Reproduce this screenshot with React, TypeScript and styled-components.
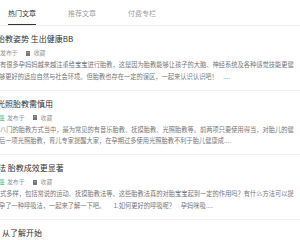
import React, { FC } from 'react'
import styled, { createGlobalStyle } from 'styled-components'

const GlobalStyle = createGlobalStyle`
  html, body {
    margin: 0;
    padding: 0;
    background: #ffffff;
    overflow: hidden;
  }
  body {
    font-family: 'Noto Sans CJK SC', 'Noto Sans', sans-serif;
    color: #333333;
  }
`

const Page = styled.div`
  width: 300px;
  height: 240px;
  overflow: hidden;
  background: #ffffff;
`

const TabBar = styled.div`
  display: flex;
  gap: 32px;
  height: 25px;
  padding-left: 8px;
  border-bottom: 1px solid #eeeeee;
  box-sizing: content-box;
`

const Tab = styled.div<{ $active?: boolean }>`
  position: relative;
  display: flex;
  align-items: center;
  height: 25px;
  font-size: 7px;
  line-height: 10px;
  color: ${({ $active }) => ($active ? '#333333' : '#a0a0a0')};
  white-space: nowrap;
  &::after {
    content: '';
    position: absolute;
    left: 0;
    right: 0;
    bottom: 0;
    height: 1.5px;
    background: ${({ $active }) => ($active ? '#333333' : 'transparent')};
  }
`

const List = styled.div`
  display: flex;
  flex-direction: column;
`

const Item = styled.div`
  padding: 7px 0 7.6px;
  border-bottom: 1px solid #f0f0f0;
  overflow: hidden;
`

const Title = styled.div<{ $shift: number }>`
  margin-left: ${({ $shift }) => $shift}px;
  font-size: 8px;
  line-height: 11px;
  color: #333333;
  white-space: pre;
`

const Meta = styled.div`
  display: flex;
  align-items: center;
  margin-top: 5px;
  height: 8px;
  font-size: 5.9px;
  line-height: 8px;
  color: #999999;
  white-space: nowrap;
`

const Tag = styled.span<{ $shift: number }>`
  margin-left: ${({ $shift }) => $shift}px;
  margin-right: 2px;
  color: #3cb371;
`

const Published = styled.span<{ $shift: number }>`
  margin-left: ${({ $shift }) => $shift}px;
  margin-right: 8px;
`

const Collect = styled.span`
  display: flex;
  align-items: center;
  gap: 4px;
`

const Body = styled.div`
  margin-top: 2px;
  font-size: 6.25px;
  line-height: 11.5px;
  color: #777777;
`

const Line = styled.div<{ $shift: number }>`
  margin-left: ${({ $shift }) => $shift}px;
  white-space: pre;
`

const BookIcon: FC = () => (
  <svg width='4' height='5' viewBox='0 0 4 5'>
    <rect x='0' y='0' width='4' height='4' fill='#777777' />
    <path d='M0 4 L2 3.2 L4 4 L4 5 L0 5 Z' fill='#777777' />
    <rect x='0.8' y='1.2' width='2.4' height='0.5' fill='#cccccc' />
  </svg>
)

type Article = {
  title: string
  titleShift: number
  tag?: string
  metaShift: number
  lines: [string, number][]
}

const articles: Article[] = [
  {
    title: '胎教姿势 生出健康BB',
    titleShift: -3,
    metaShift: 0,
    lines: [
      ['有很多孕妈妈越来越注重给宝宝进行胎教，这是因为胎教能够让孩子的大脑、神经系统及各种感觉技能更健', 0],
      ['够更好的适应自然与社会环境。但胎教也存在一定的误区，一起来认识认识吧！    ....', -1],
    ],
  },
  {
    title: '光照胎教需慎用',
    titleShift: -3,
    tag: '签',
    metaShift: -1,
    lines: [
      ['八门的胎教方式当中，最为常见的有音乐胎教、抚摸胎教、光照胎教等。前两项只要使用得当，对胎儿的健', 0],
      ['后一项光照胎教，育儿专家提醒大家，在孕期过多使用光照胎教不利于胎儿健康成....', -1],
    ],
  },
  {
    title: '法 胎教成效更显著',
    titleShift: -2,
    tag: '签',
    metaShift: -1,
    lines: [
      ['式多样，包括常说的运动、抚摸胎教法等。这些胎教法真的对胎宝宝起到一定的作用吗？有什么方法可以提', 0],
      ['孕了一种呼吸法，一起来了解一下吧。      1.如何更好的呼吸呢？    孕妈咪吸....', -1],
    ],
  },
]

const App: FC = () => (
  <Page>
    <GlobalStyle />
    <TabBar>
      <Tab $active>热门文章</Tab>
      <Tab>推荐文章</Tab>
      <Tab>付费专栏</Tab>
    </TabBar>
    <List>
      {articles.map((a) => (
        <Item key={a.title}>
          <Title $shift={a.titleShift}>{a.title}</Title>
          <Meta>
            {a.tag && <Tag $shift={a.metaShift}>{a.tag}</Tag>}
            <Published $shift={a.tag ? 0 : a.metaShift}>发布于</Published>
            <Collect>
              <BookIcon />
              收藏
            </Collect>
          </Meta>
          <Body>
            {a.lines.map(([text, shift]) => (
              <Line key={text} $shift={shift}>{text}</Line>
            ))}
          </Body>
        </Item>
      ))}
      <Item>
        <Title $shift={2}>从了解开始</Title>
      </Item>
    </List>
  </Page>
)

export default App
